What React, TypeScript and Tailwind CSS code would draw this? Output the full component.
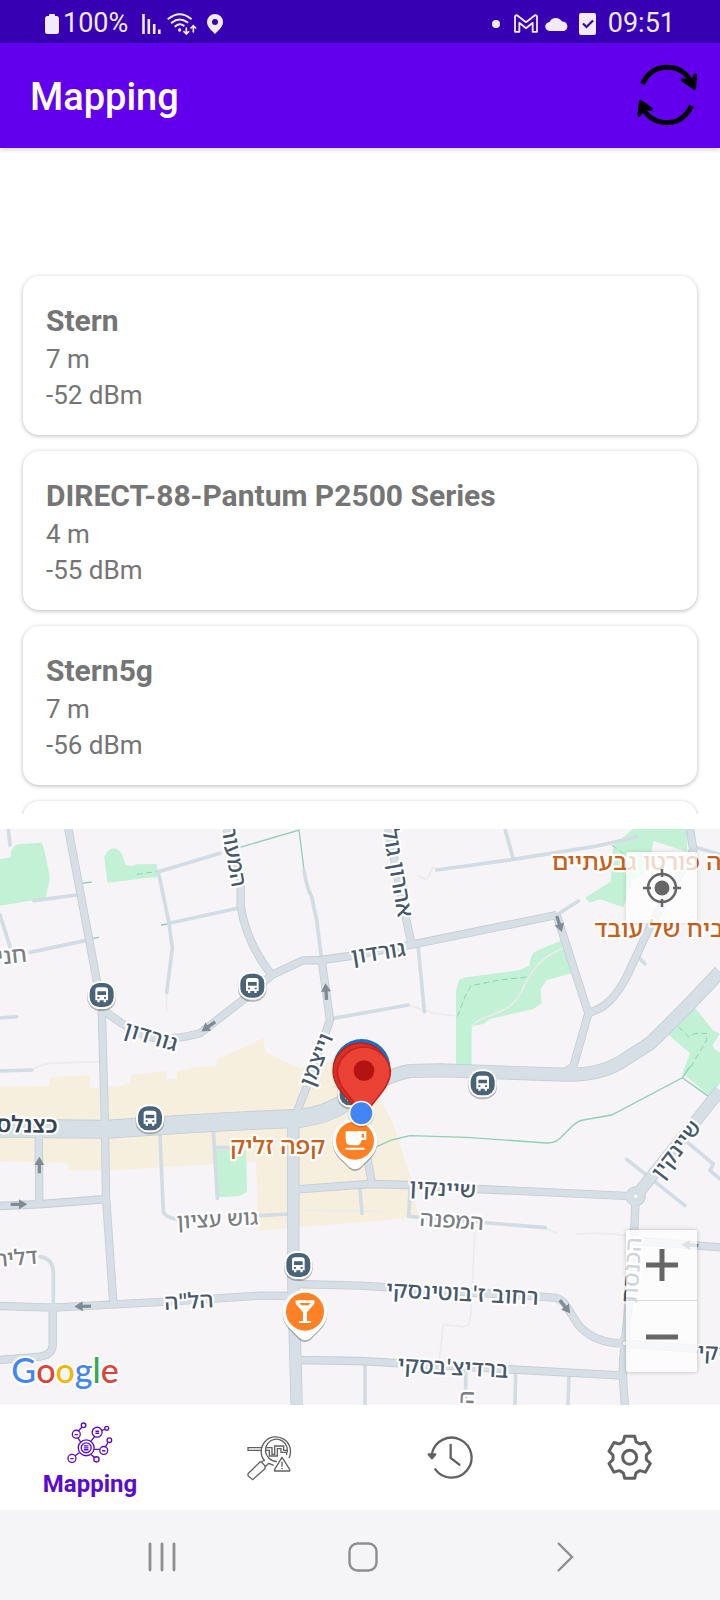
import type { ReactNode } from "react";

const networks = [
  { name: "Stern", distance: "7 m", level: "-52 dBm" },
  { name: "DIRECT-88-Pantum P2500 Series", distance: "4 m", level: "-55 dBm" },
  { name: "Stern5g", distance: "7 m", level: "-56 dBm" },
];

function StatusBar() {
  return (
    <div className="flex h-[43px] items-center justify-between bg-[#3700b3] pr-[45px] pl-[45px] pt-1 text-[27px] leading-none text-[#f0eafa]">
      <div className="flex items-center">
        <svg viewBox="0 0 14 20" className="mr-1 h-5 w-[14px]" fill="currentColor" aria-hidden="true">
          <rect x="4" width="6" height="4" rx="1" />
          <rect y="2" width="14" height="18" rx="2.5" />
        </svg>
        <span>100%</span>
        <svg viewBox="0 0 19 20" className="ml-[14px] h-5 w-[19px]" stroke="currentColor" strokeWidth="2.6" aria-hidden="true">
          <path d="M1.5 0V20M6.800 5V20M12.200 10V20M17.300 15.500V20" />
        </svg>
        <svg viewBox="0 0 90 66" className="ml-[6px] h-[22px] w-[30px]" fill="none" stroke="currentColor" strokeWidth="6" strokeLinecap="round" aria-hidden="true">
          <path d="M4 17Q38-10 72 17M14 29Q38 10 61 28M25 40Q38 29 50 38" />
          <circle cx="38" cy="51" r="5" fill="currentColor" stroke="none" />
          <path d="M58 45V62M51 56L58 63L65 56M79 57V38M72 45L79 38L86 45" strokeWidth="5" />
        </svg>
        <svg viewBox="0 0 16 20" className="ml-[10px] h-5 w-4" fill="currentColor" fillRule="evenodd" aria-hidden="true">
          <path d="M8 0a8 8 0 0 1 8 8c0 4.500-4 8-8 12C4 16 0 12.500 0 8a8 8 0 0 1 8-8Zm0 5a3 3 0 1 0 0 6 3 3 0 0 0 0-6Z" />
        </svg>
      </div>
      <div className="flex items-center">
        <span className="mr-[14px] size-2 rounded-full bg-[#f0eafa]" />
        <svg viewBox="0 0 72 56" className="h-[19px] w-6" fill="none" stroke="currentColor" strokeWidth="5.500" strokeLinejoin="round" aria-hidden="true">
          <path d="M3 53V8Q3 3 9 3L36 24L63 3Q69 3 69 8V53H56V26L36 42L16 26V53Z" />
        </svg>
        <svg viewBox="0 0 24 14" className="ml-[7px] h-[14px] w-6" fill="currentColor" aria-hidden="true">
          <path d="M5 14a4.500 4.500 0 0 1-.5-9A7 7 0 0 1 17 4.500 5 5 0 0 1 19.500 14Z" />
        </svg>
        <svg viewBox="0 0 17 22" className="ml-[10px] h-[22px] w-[17px]" aria-hidden="true">
          <rect width="17" height="22" rx="2" fill="currentColor" />
          <path d="M4 10.500L7.500 14L14 7.500" fill="none" stroke="#3700b3" strokeWidth="2.200" />
        </svg>
        <span className="ml-3">09:51</span>
      </div>
    </div>
  );
}

function AppBar() {
  return (
    <header className="relative flex h-[105px] items-center justify-between bg-[#6200ee] pr-[22px] pl-[30px] shadow-[0_1px_6px_rgba(0,0,0,0.2)]">
      <h1 className="pt-[3px] text-[38px] leading-[44px] font-medium text-white">Mapping</h1>
      <button type="button" aria-label="Refresh" className="pb-[2px]">
        <svg viewBox="828 192 186 186" className="size-[62px]" fill="none" stroke="#000" strokeWidth="15" aria-hidden="true">
          <path d="M847 252Q872 202 920 202Q972 202 994 248M995 317Q970 368 921 368Q873 368 848 325" />
          <path d="M968 240L1003 264L1006 226L996 248ZM838 345L842 305L873 328L850 322Z" fill="#000" strokeWidth="11" strokeLinejoin="round" />
        </svg>
      </button>
    </header>
  );
}

function NetworkCard({ children }: { children?: ReactNode }) {
  return (
    <li className="min-h-[159px] shrink-0 rounded-2xl bg-white px-[23px] pt-[25px] pb-[22px] text-[#757575] shadow-[0_1px_4px_rgba(0,0,0,0.28)]">
      {children}
    </li>
  );
}

const minorRoads =
  "M25 27L30 75M102 242L230 225M0 285L30 380M90 397L255 362M0 594L50 590M0 753L95 750M475 155L660 100M475 155L507 310L517 385L500 518M507 310L720 263M912 150Q920 205 935 230L950 300L965 420M1000 595L1225 555M1255 385L1273 575M1310 150L1540 118L1780 80L1908 52M1515 27L1540 118M1670 285L1735 243M2090 83L2160 103M1915 410L1935 432M480 945L490 1175Q494 1190 530 1198M640 935L652 1135M645 983L700 983M775 1187L870 1182M1080 1105L1086 1180M1230 1110L1226 1189L1636 1223M1880 1018L2055 1157M2060 965L2140 1032L2130 1052L2170 1085M120 1310Q160 1316 160 1360V1450M1095 1635V1755M1397 1650V1755M1547 1655L1545 1755M1707 1662L1704 1755";

const streets =
  "M205 27L305 560L315 920L318 1130L340 1450M310 570Q400 640 455 652T600 640L735 535L815 465M815 465L910 421L965 420L1050 408L1220 377L1670 285M680 27L722 170V260Q740 370 815 465M1670 285L1765 580L1720 740L1690 760M1765 580C1800 567 1835 555 1880 470L1945 330L2080 90L2070 27M965 420L990 600L920 800L885 890M1165 27L1215 280L1235 375M116 940L118 1150M0 1158L130 1152L320 1137M1085 920L1115 1085M890 1108L1110 1092L1230 1095L1430 1107L1907 1129M1907 1129L1900 1300L1875 1570Q1863 1640 1875 1755M158 1450V1575Q158 1603 120 1610L0 1620M0 1458L160 1463L500 1445L780 1427L880 1428M880 1392L1080 1397L1655 1432Q1685 1432 1700 1460L1735 1515Q1785 1572 1875 1570L2160 1592M890 1620L1080 1623L1870 1667M1920 1263L2160 1282";

const mainLeft = "M0 925L320 928Q640 905 900 895Q980 885 1040 845";
const mainRight =
  "M1030 850Q1155 765 1230 753L1320 751L1700 764Q1810 766 1880 715L1950 670Q2030 595 2160 455";

function Roads() {
  return (
    <g fill="none" strokeLinejoin="round">
      <path
        d="M500 520V575M95 750Q120 735 150 730L300 725M1225 555L1300 580L1370 588M1415 620C1440 580 1520 590 1555 530S1600 420 1690 385M1425 1230L1412 1490Q1410 1520 1390 1520L1330 1515L1318 1620M1635 1223L1670 1240M1730 1243Q1800 1235 1880 1247M1255 165Q1280 190 1290 160T1310 150M900 1170L1150 1175"
        stroke="#ecebec"
        strokeWidth="5"
      />
      <path d={minorRoads} stroke="#d2dce4" strokeWidth="11" strokeLinecap="round" />
      <path d={streets} stroke="#c3ced4" strokeWidth="25" />
      <path d="M880 890V1390L890 1755M1907 1129L2160 812" stroke="#c3ced4" strokeWidth="37" />
      <path d={mainLeft} stroke="#c3ced4" strokeWidth="57" />
      <path d={mainRight} stroke="#c3ced4" strokeWidth="42" />
      <circle cx="1907" cy="1129" r="29" fill="#d6dfe6" stroke="#c3ced4" strokeWidth="3" />
      <path d={streets} stroke="#d6dfe6" strokeWidth="20" />
      <path d="M880 890V1390L890 1755M1907 1129L2160 812" stroke="#d6dfe6" strokeWidth="32" />
      <path d={mainLeft} stroke="#d6dfe6" strokeWidth="52" />
      <path d={mainRight} stroke="#d6dfe6" strokeWidth="37" />
      <path d="M1848 1570Q1875 1550 1875 1520Q1882 1560 1908 1572Q1880 1590 1875 1625Q1872 1580 1848 1570Z" fill="#d6dfe6" stroke="#d6dfe6" strokeWidth="8" />
      <circle cx="1907" cy="1129" r="8" fill="#fff" stroke="#c3ced4" strokeWidth="3" />
      <circle cx="1875" cy="1570" r="8" fill="#fff" stroke="#c3ced4" strokeWidth="3" />
    </g>
  );
}

function Areas() {
  return (
    <g>
      <path
        d="M0 800L150 798V772L270 765V805L350 800L393 790V765L500 753V777H530V755L590 742L650 738V718L790 655L795 697L900 745L1000 720L1140 840L1175 900L1228 1060L1255 1192L775 1232L768 1025L600 1035L350 1050L205 1052V1030L0 1023Z"
        fill="#f6efde"
      />
      <g fill="#c3f1d5">
        <path d="M0 118L32 112Q32 75 60 72L125 68L133 90L150 175L137 235L0 257Z" />
        <path d="M322 188L313 110Q325 85 342 85Q365 90 370 115L377 135L392 138L412 133L470 132L475 170Z" />
        <path d="M1755 233L1770 248L1800 238L1870 262L1900 180L1945 150L1960 62L2060 95L2065 27H1900L1840 75L1832 185Z" />
        <path d="M1368 735V510L1378 478L1400 472L1560 450L1590 435Q1588 405 1610 392L1683 362L1715 460L1640 480L1622 508L1625 550L1600 567L1470 597L1450 612L1415 618L1415 740Z" />
        <path d="M2080 557L2000 640L2070 700L2048 760L2130 828L2160 790V697Q2140 690 2138 675L2160 640L2140 632Z" />
        <path d="M648 990H738L741 1115L720 1128L652 1132Z" />
      </g>
      <g fill="none" stroke="#8fcfb5" strokeWidth="4">
        <path d="M720 82L897 30L912 150M245 190L275 186M272 357L297 352M483 315L503 312M1130 980L1175 960L1230 947L1400 952L1640 969Q1665 970 1680 955L1720 915Q1735 902 1750 900L1835 885L2047 773L2130 832M2047 773L2070 740" />
        <path d="M410 163L470 155M1372 590L1395 530L1413 497L1500 480L1590 470M1835 75L1870 100M2035 620L2065 650L2085 640L2120 640V660L2070 745" strokeWidth="3" strokeDasharray="18 10" />
      </g>
    </g>
  );
}

const arrows = [
  [625, 620, 235],
  [978, 515, -4],
  [1678, 312, 162],
  [118, 1035, 0],
  [57, 1153, 90],
  [248, 1459, -92],
  [1695, 1460, 142],
  [2070, 1275, -86],
];

const busStops = [
  [305, 525],
  [757, 497],
  [1448, 790],
  [450, 895],
  [895, 1335],
  [1055, 820],
];

function BusStop({ x, y }: { x: number; y: number }) {
  return (
    <g transform={`translate(${x} ${y})`}>
      <rect x="-43" y="-38" width="86" height="86" rx="38" fill="#000" opacity="0.25" />
      <rect x="-42" y="-42" width="84" height="84" rx="37" fill="#fff" />
      <rect x="-36" y="-36" width="72" height="72" rx="29" fill="#496478" />
      <path d="M-19-15Q-19-23-10-23H10Q19-23 19-15V16H13V22H6V16H-6V22H-13V16H-19Z" fill="#fff" />
      <path d="M-13-11H13V0H-13ZM-13 6H-7V11H-13ZM7 6H13V11H7Z" fill="#496478" />
    </g>
  );
}

function PlacePin({ x, y, children }: { x: number; y: number; children: ReactNode }) {
  const shape = "M-48 48A67 67 0 1 1 48 48L16 80Q0 92-16 80Z";
  return (
    <g transform={`translate(${x} ${y})`}>
      <path d={shape} fill="#000" opacity="0.3" transform="translate(0 5)" />
      <path d={shape} fill="#fff" />
      <circle r="57" fill="#ff8126" />
      {children}
    </g>
  );
}

const road = "#46586c";
const minor = "#7b7f84";
const place = "#c9601a";

type Label = {
  text: string;
  x: number;
  y: number;
  r?: number;
  color: string;
  anchor?: "start" | "middle" | "end";
  size?: number;
  weight?: number;
};

const labels: Label[] = [
  { text: "המעור", x: 680, y: 114, r: 80, color: road },
  { text: "אהרון גול", x: 1171, y: 162, r: 80, color: road, size: 68 },
  { text: "גורדון", x: 446, y: 671, r: 17, color: road, size: 68 },
  { text: "גורדון", x: 1138, y: 420, r: -9, color: road, size: 68 },
  { text: "וייצמן", x: 970, y: 728, r: -68, color: road },
  { text: "חני", x: 82, y: 425, r: -6, color: minor, anchor: "end", size: 68 },
  { text: "כצנלס", x: 172, y: 939, r: 1, color: "#344455", anchor: "end", weight: 600, size: 68 },
  { text: "קפה זליק", x: 833, y: 1003, color: place, size: 72 },
  { text: "גוש עציון", x: 653, y: 1220, r: -3, color: minor, size: 64 },
  { text: "דליה", x: 115, y: 1330, r: -5, color: minor, anchor: "end" },
  { text: "הל\"ה", x: 568, y: 1466, r: -3, color: road },
  { text: "שיינקין", x: 1327, y: 1128, r: 3, color: road },
  { text: "שיינקין", x: 2046, y: 1002, r: -53, color: road },
  { text: "המפנה", x: 1354, y: 1224, r: 4, color: minor },
  { text: "רחוב ז'בוטינסקי", x: 1386, y: 1443, r: 3, color: road, size: 68 },
  { text: "ברדיצ'בסקי", x: 1358, y: 1665, r: 3, color: road, size: 68 },
  { text: "הכנסת", x: 1918, y: 1352, r: -86, color: road, size: 68 },
  { text: "סקי", x: 2092, y: 1617, r: 3, color: road, anchor: "start" },
  { text: "ה", x: 1421, y: 1733, r: -88, color: minor },
  { text: "ה פורטו גבעתיים", x: 1655, y: 150, color: place, anchor: "start", size: 72 },
  { text: "ביח של עובד", x: 1783, y: 350, color: place, anchor: "start", size: 72 },
];

function MapDrawing() {
  return (
    <svg viewBox="0 27 2160 1728" className="block h-auto w-full" role="img" aria-label="Map">
      <rect y="27" width="2160" height="1728" fill="#f6f4f6" />
      <Areas />
      <Roads />
      {arrows.map(([x, y, r]) => (
        <path key={`${x}-${y}`} d="M-5 25V0H-15L0-25L15 0H5V25Z" fill="#7f8b95" transform={`translate(${x} ${y}) rotate(${r})`} />
      ))}
      {labels.map((l) => (
        <text
          key={`${l.text}-${l.x}`}
          transform={`translate(${l.x} ${l.y}) rotate(${l.r ?? 0})`}
          textAnchor={l.anchor ?? "middle"}
          fontFamily="'Noto Sans Hebrew', 'Open Sans', 'Liberation Sans', sans-serif"
          fontSize={l.size ?? 66}
          fontWeight={l.weight ?? 500}
          fill={l.color}
          stroke="#fff"
          strokeWidth="13"
          strokeLinejoin="round"
          paintOrder="stroke"
        >
          {l.text}
        </text>
      ))}
      {busStops.map(([x, y]) => (
        <BusStop key={`${x}-${y}`} x={x} y={y} />
      ))}
      <PlacePin x={1065} y={962}>
        <path d="M-28-28H34V-2H20Q18 14 4 14H-12Q-28 14-28-4ZM20-20V-9H27V-20ZM-28 21H28V27H-28Z" fill="#fff" fillRule="evenodd" />
      </PlacePin>
      <PlacePin x={915} y={1475}>
        <path d="M-28-34H28V-24L6 2V28H18V34H-18V28H-6V2L-28-24ZM-17-26L-11-19H11L17-26Z" fill="#fff" fillRule="evenodd" />
      </PlacePin>
      <circle cx="1085" cy="743" r="86" fill="#1a6fc4" />
      <path d="M1083 900C1076 850 999 820 999 752A83 83 0 0 1 1165 752C1165 820 1090 850 1083 900Z" fill="#d93025" stroke="#b8201f" strokeWidth="4" />
      <path d="M1092 900C1084 850 1012 815 1012 752A80 80 0 0 1 1171 752C1171 815 1100 850 1092 900Z" fill="#ea4335" stroke="#c5221f" strokeWidth="5" />
      <circle cx="1092" cy="752" r="31" fill="#b31412" />
      <circle cx="1084" cy="884" r="39" fill="#000" opacity="0.15" />
      <circle cx="1084" cy="880" r="38" fill="#fff" />
      <circle cx="1084" cy="880" r="33" fill="#4285f4" />
      <text x="34" y="1690" fontFamily="Lato, sans-serif" fontSize="102" fontWeight="500" stroke="#fff" strokeWidth="12" strokeLinejoin="round" paintOrder="stroke">
        <tspan fill="#4285f4">G</tspan>
        <tspan fill="#db4437">o</tspan>
        <tspan fill="#f4b400">o</tspan>
        <tspan fill="#4285f4">g</tspan>
        <tspan fill="#34a853">l</tspan>
        <tspan fill="#db4437">e</tspan>
      </text>
    </svg>
  );
}

function MapView() {
  return (
    <section className="relative overflow-hidden">
      <MapDrawing />
      <button type="button" aria-label="My location" className="absolute top-[23px] right-[23px] grid size-[71px] place-items-center rounded-xs bg-white/75 shadow-[0_0_4px_rgba(0,0,0,0.15)]">
        <svg viewBox="-20 -20 40 40" className="size-10" fill="none" stroke="#666" strokeWidth="2.500" aria-hidden="true">
          <circle r="14" />
          <circle r="7.500" fill="#666" stroke="none" />
          <path d="M0-19V-11M0 11V19M-19 0H-11M11 0H19" />
        </svg>
      </button>
      <div className="absolute right-[23px] bottom-[33px] flex w-[71px] flex-col divide-y divide-[#dcdcdc] rounded-xs bg-white/75 shadow-[0_0_4px_rgba(0,0,0,0.25)]">
        <button type="button" aria-label="Zoom in" className="grid h-[71px] place-items-center">
          <svg viewBox="0 0 32 32" className="size-8" stroke="#666" strokeWidth="5" aria-hidden="true">
            <path d="M16 0V32M0 16H32" />
          </svg>
        </button>
        <button type="button" aria-label="Zoom out" className="grid h-[71px] place-items-center">
          <svg viewBox="0 0 32 32" className="size-8" stroke="#666" strokeWidth="5" aria-hidden="true">
            <path d="M0 16H32" />
          </svg>
        </button>
      </div>
    </section>
  );
}

const hubNodes = [
  [227, 102, 12],
  [249, 75, 7],
  [290, 96, 15],
  [319, 84, 6],
  [327, 120, 7],
  [310, 151, 12],
  [288, 178, 8],
  [214, 175, 12],
];

function HubIcon() {
  return (
    <svg viewBox="200 62 140 130" className="h-[43px] w-[47px]" fill="none" stroke="currentColor" strokeWidth="4" aria-hidden="true">
      <circle cx="257" cy="143" r="24" />
      <circle cx="257" cy="143" r="15" />
      {hubNodes.map(([x, y, r]) => (
        <circle key={`${x}`} cx={x} cy={y} r={r} />
      ))}
      <path d="M240 125L232 113M233 92L244 81M271 123L282 110M304 91L313 87M281 148H298M315 140L323 127M271 163L282 172M237 157L224 167M250 137H264M250 143H264M250 149H264M222 103H232M285 93H296M285 99H296M305 152H315M209 176H219" />
    </svg>
  );
}

function AnalysisIcon() {
  return (
    <svg viewBox="740 102 141 141" className="size-[47px]" fill="none" stroke="currentColor" strokeWidth="4" aria-hidden="true">
      <path d="M793 183A44 44 0 1 1 866 174M806 175A33 33 0 1 1 858 165M806 175Q815 184 830 185" />
      <path d="M785 143H743V151H785M797 143H815V163H823V138H850V151H861M797 151H807V168H831V146H842V157H859" />
      <path d="M779 186L743 221V227L757 239L794 206V197L783 186ZM783 186L793 180M794 201L805 190L820 196" />
      <path d="M845 172L868 208V213H823V208ZM845 185V200M845 204V208" fill="#fff" strokeLinejoin="round" />
    </svg>
  );
}

function HistoryIcon() {
  return (
    <svg viewBox="200 102 141 141" className="size-[47px]" fill="none" stroke="currentColor" strokeWidth="7" strokeLinecap="round" aria-hidden="true">
      <path d="M215 160A60 60 0 1 1 225 208M271 135V174L297 194" />
      <path d="M205 163H225L215 175Z" fill="currentColor" strokeLinejoin="round" />
    </svg>
  );
}

function GearIcon() {
  const tooth = [
    [-25, -43],
    [-19, -47],
    [-15, -63],
    [15, -63],
    [19, -47],
    [25, -43],
  ];
  const points = [0, 60, 120, 180, 240, 300]
    .flatMap((deg) => {
      const a = (deg * Math.PI) / 180;
      return tooth.map(([x, y]) => `${x * Math.cos(a) - y * Math.sin(a)},${x * Math.sin(a) + y * Math.cos(a)}`);
    })
    .join(" ");
  return (
    <svg viewBox="-68 -70 141 141" className="size-[47px]" fill="none" stroke="currentColor" strokeWidth="9" strokeLinejoin="round" aria-hidden="true">
      <polygon points={points} />
      <circle r="21" />
    </svg>
  );
}

function BottomNav() {
  const item = "flex flex-col items-center justify-center text-[#616161]";
  return (
    <nav className="grid h-[105px] grid-cols-4 bg-white">
      <a href="#mapping" aria-current="page" className="flex flex-col items-center pt-4 text-[#5b0bd0]">
        <HubIcon />
        <span className="mt-[6px] text-[24px] leading-7 font-bold">Mapping</span>
      </a>
      <a href="#analysis" aria-label="Analysis" className={item}>
        <AnalysisIcon />
      </a>
      <a href="#history" aria-label="History" className={item}>
        <HistoryIcon />
      </a>
      <a href="#settings" aria-label="Settings" className={item}>
        <GearIcon />
      </a>
    </nav>
  );
}

function SystemNav() {
  return (
    <div className="grid h-[90px] grid-cols-3 place-items-center bg-[#f5f5f7] pt-1 pr-[56px] pl-[61px] text-[#8e8e90]">
      <button type="button" aria-label="Recent apps">
        <svg viewBox="0 0 28 30" className="h-[30px] w-7" stroke="currentColor" strokeWidth="2.800" strokeLinecap="round" aria-hidden="true">
          <path d="M2 2V28M14 2V28M26 2V28" />
        </svg>
      </button>
      <button type="button" aria-label="Home">
        <svg viewBox="0 0 30 30" className="size-[30px]" fill="none" stroke="currentColor" strokeWidth="2.400" aria-hidden="true">
          <rect x="1.500" y="1.500" width="27" height="27" rx="8" />
        </svg>
      </button>
      <button type="button" aria-label="Back">
        <svg viewBox="0 0 28 30" className="h-[30px] w-7" fill="none" stroke="currentColor" strokeWidth="2.400" aria-hidden="true">
          <path d="M8 1L22 15L8 29" />
        </svg>
      </button>
    </div>
  );
}

export default function App() {
  return (
    <div className="min-h-screen bg-white font-[Roboto,sans-serif]">
      <StatusBar />
      <AppBar />
      <main>
        <ul className="mt-[126px] mb-[15px] flex h-[540px] flex-col gap-4 overflow-hidden px-[23px] pt-[2px]">
          {networks.map((n) => (
            <NetworkCard key={n.name}>
              <h2 className="text-[30px] leading-10 font-bold">{n.name}</h2>
              <p className="text-[26px] leading-9">{n.distance}</p>
              <p className="text-[26px] leading-9">{n.level}</p>
            </NetworkCard>
          ))}
          <NetworkCard />
        </ul>
        <MapView />
      </main>
      <BottomNav />
      <SystemNav />
    </div>
  );
}
